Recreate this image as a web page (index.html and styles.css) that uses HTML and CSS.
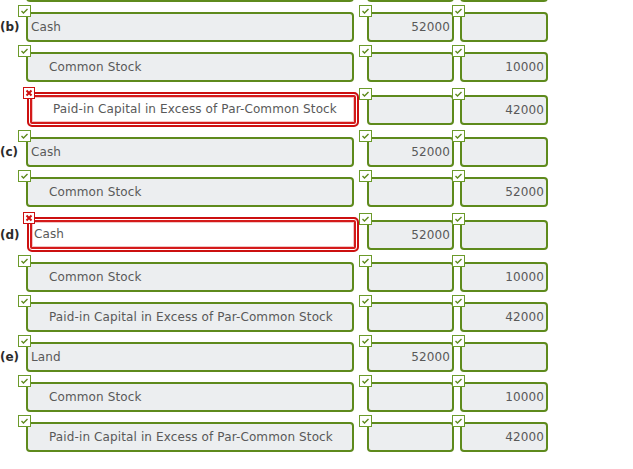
FILE: index.html
```html
<!DOCTYPE html>
<html>
<head>
<meta charset="utf-8">
<link rel="stylesheet" href="styles.css">
</head>
<body>
<div class="sheet">
  <div class="lbl"></div>
  <div class="cell"><div class="f indent"></div></div>
  <div class="cell"><div class="f num"></div></div>
  <div class="cell"><div class="f num"></div></div>

  <div class="lbl">(b)</div>
  <div class="cell"><span class="ok"></span><div class="f">Cash</div></div>
  <div class="cell"><span class="ok"></span><div class="f num">52000</div></div>
  <div class="cell"><span class="ok"></span><div class="f num"></div></div>

  <div class="lbl"></div>
  <div class="cell"><span class="ok"></span><div class="f indent">Common Stock</div></div>
  <div class="cell"><span class="ok"></span><div class="f num"></div></div>
  <div class="cell"><span class="ok"></span><div class="f num">10000</div></div>

  <div class="lbl"></div>
  <div class="cell"><span class="bad"></span><div class="f err indent">Paid-in Capital in Excess of Par-Common Stock</div></div>
  <div class="cell"><span class="ok"></span><div class="f num"></div></div>
  <div class="cell"><span class="ok"></span><div class="f num">42000</div></div>

  <div class="lbl">(c)</div>
  <div class="cell"><span class="ok"></span><div class="f">Cash</div></div>
  <div class="cell"><span class="ok"></span><div class="f num">52000</div></div>
  <div class="cell"><span class="ok"></span><div class="f num"></div></div>

  <div class="lbl"></div>
  <div class="cell"><span class="ok"></span><div class="f indent">Common Stock</div></div>
  <div class="cell"><span class="ok"></span><div class="f num"></div></div>
  <div class="cell"><span class="ok"></span><div class="f num">52000</div></div>

  <div class="lbl">(d)</div>
  <div class="cell"><span class="bad"></span><div class="f err">Cash</div></div>
  <div class="cell"><span class="ok"></span><div class="f num">52000</div></div>
  <div class="cell"><span class="ok"></span><div class="f num"></div></div>

  <div class="lbl"></div>
  <div class="cell"><span class="ok"></span><div class="f indent">Common Stock</div></div>
  <div class="cell"><span class="ok"></span><div class="f num"></div></div>
  <div class="cell"><span class="ok"></span><div class="f num">10000</div></div>

  <div class="lbl"></div>
  <div class="cell"><span class="ok"></span><div class="f indent">Paid-in Capital in Excess of Par-Common Stock</div></div>
  <div class="cell"><span class="ok"></span><div class="f num"></div></div>
  <div class="cell"><span class="ok"></span><div class="f num">42000</div></div>

  <div class="lbl">(e)</div>
  <div class="cell"><span class="ok"></span><div class="f">Land</div></div>
  <div class="cell"><span class="ok"></span><div class="f num">52000</div></div>
  <div class="cell"><span class="ok"></span><div class="f num"></div></div>

  <div class="lbl"></div>
  <div class="cell"><span class="ok"></span><div class="f indent">Common Stock</div></div>
  <div class="cell"><span class="ok"></span><div class="f num"></div></div>
  <div class="cell"><span class="ok"></span><div class="f num">10000</div></div>

  <div class="lbl"></div>
  <div class="cell"><span class="ok"></span><div class="f indent">Paid-in Capital in Excess of Par-Common Stock</div></div>
  <div class="cell"><span class="ok"></span><div class="f num"></div></div>
  <div class="cell"><span class="ok"></span><div class="f num">42000</div></div>
</div>
</body>
</html>
```
FILE: styles.css
```css
html, body {
  margin: 0;
  padding: 0;
  background: #fff;
}
body {
  font-family: "DejaVu Sans", Verdana, sans-serif;
  font-size: 12px;
  color: #595959;
  overflow: hidden;
}
.sheet {
  margin-top: -28px;
  display: grid;
  grid-template-columns: 26px 341px 93px 88px;
  row-gap: 10px;
  align-items: center;
}
.lbl {
  font-weight: bold;
  color: #2b2b2b;
  font-size: 12px;
  white-space: nowrap;
}
.cell {
  position: relative;
}
.f {
  box-sizing: border-box;
  height: 30px;
  line-height: 26px;
  border: 2px solid #5e8a1c;
  border-radius: 4px;
  background: #eceef0;
  padding: 0 3px;
  white-space: nowrap;
  overflow: hidden;
  letter-spacing: 0.12px;
}
.sheet .cell:nth-child(4n+2) .f { width: 328px; }
.sheet .cell:nth-child(4n+3) .f { width: 87px; }
.sheet .cell:nth-child(4n+4) .f { width: 88px; }
.indent { padding-left: 21px; }
.num { text-align: right; padding-right: 2px; }
.sheet .cell .f.err {
  width: 332px;
  height: 35px;
  line-height: 31px;
  margin-left: 1px;
  border: 2px solid #cc1010;
  border-radius: 5px;
  background: #fff;
  box-shadow: inset 0 0 0 1px #fff, inset 0 0 0 3px #d41a1a, inset 0 0 0 4px #f2c4c4;
  padding-left: 5px;
}
.sheet .cell .f.err.indent { padding-left: 24px; }
.ok, .bad {
  position: absolute;
  z-index: 2;
  box-sizing: border-box;
  background: #fff;
}
.ok {
  left: -8px;
  top: -7px;
  width: 13px;
  height: 12px;
  border: 1px solid #6b9a2a;
  background-image: url("data:image/svg+xml;utf8,<svg xmlns='http://www.w3.org/2000/svg' width='11' height='10'><polyline points='2.5,5 4.5,7 8.5,3' fill='none' stroke='%235e8a1c' stroke-width='1.4'/></svg>");
  background-repeat: no-repeat;
}
.bad {
  left: -3px;
  top: -5px;
  width: 12px;
  height: 12px;
  border: 1px solid #cc1010;
  background-image: url("data:image/svg+xml;utf8,<svg xmlns='http://www.w3.org/2000/svg' width='10' height='10'><path d='M2.5 2.5 L7.5 7.5 M7.5 2.5 L2.5 7.5' stroke='%23d01010' stroke-width='2'/></svg>");
  background-repeat: no-repeat;
}
```
